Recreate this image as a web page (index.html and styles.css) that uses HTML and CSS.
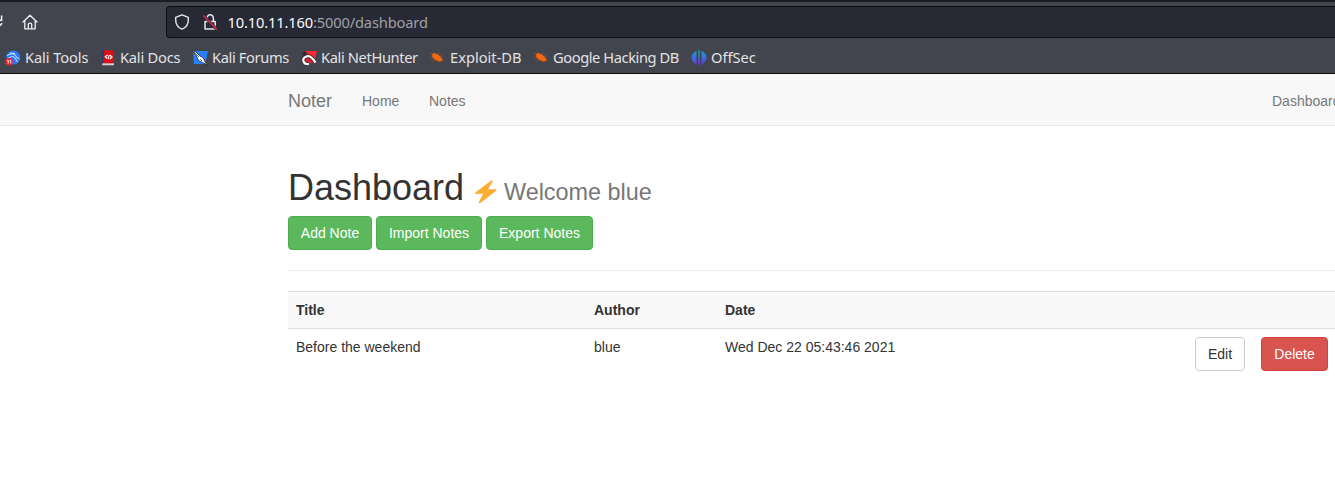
FILE: index.html
```html
<!DOCTYPE html>
<html lang="en">
<head>
<meta charset="utf-8">
<title>Noter</title>
<link rel="stylesheet" href="styles.css">
</head>
<body>
<header class="browser">
  <div class="toolbar">
    <svg class="reload" width="4" height="16" viewBox="0 0 4 16"><path d="M0 6.200H1.600V1.500M0 11.500Q1.800 10.500 1.500 9" fill="none" stroke="#fbfbfe" stroke-width="1.500"/></svg>
    <svg class="home" width="16" height="16" viewBox="0 0 16 16" fill="none" stroke="#f0f0f4" stroke-width="1.300" stroke-linejoin="round" stroke-linecap="round"><path d="M1 8 8 1.200 15 8M2.800 6.800V14.800H13.200V6.800M6.300 14.500V10.500Q6.300 9.200 8 9.200T9.700 10.500V14.500"/></svg>
    <div class="urlbar">
      <svg class="shield" width="16" height="16" viewBox="0 0 16 16"><path d="M8 .9 14.300 3.300V6C14.300 10.500 11.800 13.700 8 15.200 4.200 13.700 1.700 10.500 1.700 6V3.300Z" fill="none" stroke="#e8e8ec" stroke-width="1.400" stroke-linejoin="round"/></svg>
      <svg class="lock" width="16" height="18" viewBox="0 0 16 18" fill="none"><path d="M5 8V5.500A3.200 3.800 0 0 1 11.400 5.500V8M3 8.500H13.200V16H3Z" stroke="#e8e8ec" stroke-width="1.500" stroke-linejoin="round"/><path d="M1.500 2.500 14.800 16.500" stroke="#272935" stroke-width="3"/><path d="M1.500 2.500 14.800 16.500" stroke="#e22850" stroke-width="1.500"/></svg>
      <div class="url"><span class="host">10.10.11.160</span>:5000/dashboard</div>
    </div>
  </div>
  <nav class="bookmarks">
    <a class="bm tools"><svg width="16" height="16" viewBox="0 0 16 16"><circle cx="8.300" cy="7.500" r="7" fill="#2777ff"/><path d="M2 5.500Q8 2 10.500 5.500T14.500 9M3.500 8Q8 5 10 8L12.500 12M5 3 10 3.500" fill="none" stroke="#c4dcff" stroke-width="1.100"/><circle cx="4" cy="11.700" r="3.800" fill="#e3232c"/><path d="M2 10.300H3.200V13.600M4.600 10.300H5.800V13.600" fill="none" stroke="#fff" stroke-width=".9"/></svg><span>Kali Tools</span></a>
    <a class="bm docs"><svg width="16" height="16" viewBox="0 0 16 16"><path d="M2 .3H4V13H2Z" fill="#173a73"/><path d="M3.500 .3H14V13.500H3Z" fill="#dc0d17"/><path d="M2.300 13.300H14V15.300H2.300Z" fill="#d8cccc"/><path d="M7.500 5 5.300 6.800 7.300 8.500M10.200 5.300 12 7 10 9M9.300 4.800 8.200 9.200" fill="none" stroke="#fff" stroke-width="1.200"/></svg><span>Kali Docs</span></a>
    <a class="bm forums"><svg width="16" height="16" viewBox="0 0 16 16"><path d="M1 1H16L13.300 14H2Z" fill="#2680ff"/><path d="M0 .5 4 2 8 6 11.500 8 12.500 11 15.500 15 10.500 12.500 6.500 10.500 4.500 6Z" fill="#fff" stroke="#222b35" stroke-width=".8"/><path d="M2 2 7 7M8 9 10 11" fill="none" stroke="#333" stroke-width=".7"/></svg><span>Kali Forums</span></a>
    <a class="bm hunter"><svg width="16" height="16" viewBox="0 0 16 16"><path d="M3 1H16L13 13H3Z" fill="#f52834"/><path d="M1 4 4 1 6.500 3.500 3 6Z" fill="#272a32"/><path d="M8 14Q3 14.500 2.300 10.800T7 6.200Q10 5.800 14.500 12.500" fill="none" stroke="#35232b" stroke-width="4"/><path d="M8 14Q3 14.500 2.300 10.800T7 6.200Q10 5.800 14.500 12.500" fill="none" stroke="#fff" stroke-width="2.300"/><path d="M6 11Q8 8.500 11 13" fill="none" stroke="#c81e31" stroke-width="1.500"/></svg><span>Kali NetHunter</span></a>
    <a class="bm exploit"><svg width="16" height="16" viewBox="0 0 16 16"><path d="M2.500 4 5 3 9 4.500 12 7 14 10 11.500 11.500 7 10.500 3.500 7.500Z" fill="#f26711"/><path d="M4 5 1 3M5 8 1 7.500M6 10 3 11M8 4 10 3M11 6 14 6M12 9 15 11M8 10 10 13" stroke="#a65128" stroke-width=".7"/></svg><span>Exploit-DB</span></a>
    <a class="bm google"><svg width="16" height="16" viewBox="0 0 16 16"><path d="M2.500 4 5 3 9 4.500 12 7 14 10 11.500 11.500 7 10.500 3.500 7.500Z" fill="#f26711"/><path d="M4 5 1 3M5 8 1 7.500M6 10 3 11M8 4 10 3M11 6 14 6M12 9 15 11M8 10 10 13" stroke="#a65128" stroke-width=".7"/></svg><span>Google Hacking DB</span></a>
    <a class="bm offsec"><svg width="16" height="16" viewBox="0 0 16 16"><defs><linearGradient id="og" gradientUnits="userSpaceOnUse" x1="8" y1="1" x2="8" y2="15"><stop stop-color="#18a5c5"/><stop offset="1" stop-color="#6431ed"/></linearGradient></defs><path d="M5.500 1V14.500Q.5 12 .5 7.500T5.500 1ZM7.300 .5H8.700V15.500H7.300ZM10.500 1Q15.500 3.500 15.500 7.500T10.500 14.500Z" fill="url(#og)"/></svg><span>OffSec</span></a>
  </nav>
</header>
<nav class="navbar"><a class="brand">Noter</a><a class="home-link">Home</a><a class="notes-link">Notes</a><a class="dash-link">Dashboard</a></nav>
<main class="content">
  <h1><span class="title">Dashboard</span><svg width="24" height="26" viewBox="0 0 24 26"><path d="M17.500 1.200 1 13.700Q.5 14.800 1.500 14.800H9.200L4.700 23.300Q4.700 24.500 6 24.300L22.500 11.400Q22.800 10.300 21.600 10.200H14.200L18.800 2.200Q18.700 1 17.500 1.200Z" fill="#ffac33"/></svg><small>Welcome blue</small></h1>
  <div class="actions"><a class="btn success add">Add Note</a><a class="btn success import">Import Notes</a><a class="btn success export">Export Notes</a></div>
  <hr>
  <div class="table">
    <div class="row head"><span>Title</span><span>Author</span><span>Date</span></div>
    <div class="row"><span>Before the weekend</span><span>blue</span><span>Wed Dec 22 05:43:46 2021</span><a class="btn edit">Edit</a><a class="btn danger">Delete</a></div>
  </div>
</main>
</body>
</html>
```
FILE: styles.css
```css
* { box-sizing: border-box; }
body { margin: 0; width: 1335px; height: 489px; overflow: hidden; background: #fff; color: #333; font: 14px/20px "Liberation Sans", Arial, sans-serif; }
svg { display: block; flex: none; }
.browser { height: 74px; background: #42454d; border-top: 2px solid #1b1c21; border-bottom: 1px solid #0c0c0d; font: 14.67px/20px "Noto Sans", sans-serif; color: #e2e2e5; }
.toolbar { display: flex; align-items: center; height: 40px; }
.home { margin-left: 18px; }
.urlbar { display: flex; align-items: center; flex: 1; height: 32px; margin-left: 128px; padding-left: 7px; background: #272935; border: 1px solid #0e0e11; border-right: 0; border-radius: 4px 0 0 4px; }
.lock { margin-left: 12px; }
.url { margin-left: 9.5px; color: #a0a1a6; white-space: nowrap; letter-spacing: -.15px; }
.host { color: #fbfbfe; }
.bookmarks { display: flex; height: 31px; padding: 1px 0 0 5px; }
.bm { display: flex; align-items: center; gap: 4px; height: 28px; white-space: nowrap; flex: none; }
.bm svg { margin-top: 1px; }
.tools { width: 95px; letter-spacing: -.1px; }
.docs { width: 92px; letter-spacing: -.22px; }
.forums { width: 109px; letter-spacing: -.37px; }
.hunter { width: 128px; letter-spacing: -.37px; }
.exploit { width: 104px; gap: 5px; }
.google { width: 158px; letter-spacing: -.42px; }
.navbar { display: flex; height: 52px; padding: 17px 0 0 288px; background: #f8f8f8; border-bottom: 1px solid #e7e7e7; color: #777; white-space: nowrap; overflow: hidden; }
.navbar a { flex: none; }
.brand { width: 74px; font-size: 18px; }
.home-link { width: 67px; }
.notes-link { width: 37px; }
.dash-link { margin-left: 806px; }
.content { margin-left: 288px; }
h1 { display: flex; align-items: baseline; margin: 42px 0 8px; height: 40px; font-size: 36px; line-height: 40px; font-weight: 400; white-space: nowrap; }
.title { width: 186px; }
h1 svg { align-self: flex-start; margin-top: 11px; }
small { margin-left: 6px; font-size: 23.4px; color: #777; }
.actions { display: flex; gap: 4px; }
.btn { display: block; height: 34px; padding: 6px 0; border: 1px solid #ccc; border-radius: 4px; text-align: center; }
.success { background: #5cb85c; border-color: #4cae4c; color: #fff; }
.add { width: 84px; }
.import { width: 106px; }
.export { width: 107px; }
hr { height: 1px; margin: 20px 0; border: 0; background: #eee; }
.row { display: grid; grid-template-columns: 298px 131px 470px 66px 67px; padding: 8px; height: 51px; border-top: 1px solid #ddd; white-space: nowrap; }
.head { height: 37px; background: #f9f9f9; font-weight: 700; }
.edit { width: 50px; }
.danger { width: 67px; background: #d9534f; border-color: #d43f3a; color: #fff; }
```
